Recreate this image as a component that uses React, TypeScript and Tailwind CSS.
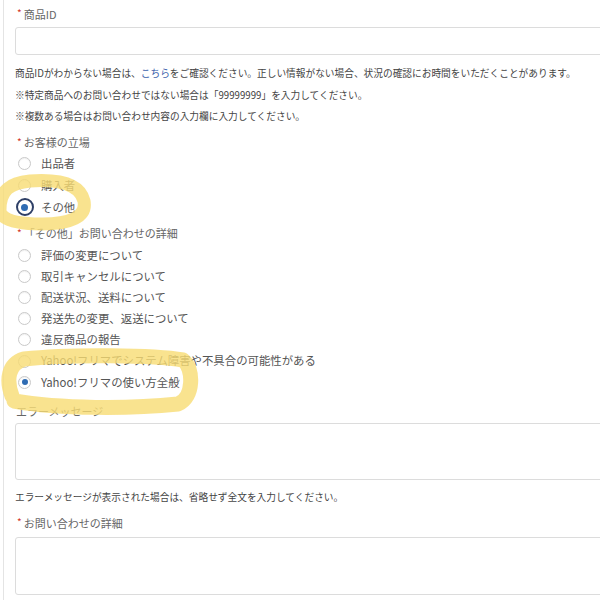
import React from "react";

const font = { fontFamily: '"Noto Sans CJK JP", "Noto Sans", sans-serif' };

function Label({ text, required = true }: { text: string; required?: boolean }) {
  return (
    <div className="flex h-[20px] items-center text-[11px] text-[#666]">
      {required ? (
        <span className="mr-[2px] -translate-y-[1px] pl-[2px] text-[10px] leading-none text-[#d2362b]">*</span>
      ) : null}
      <span>{text}</span>
    </div>
  );
}

function Radio({ label, checked = false, focused = false }: { label: string; checked?: boolean; focused?: boolean }) {
  return (
    <div className="flex h-[21.2px] items-center text-[11.4px] text-[#555]">
      <span className="flex w-[19px] items-center justify-center">
        {focused ? (
          <span className="flex h-[18px] w-[18px] items-center justify-center rounded-full border-2 border-[#2e3f66] bg-white">
            <span className="h-[7px] w-[7px] rounded-full bg-[#2f6cb3]" />
          </span>
        ) : (
          <span className="flex h-[13px] w-[13px] items-center justify-center rounded-full border border-[#c9c9c9] bg-white shadow-[inset_0_1px_1px_rgba(0,0,0,0.06)]">
            {checked ? <span className="h-[6px] w-[6px] rounded-full bg-[#2f6cb3]" /> : null}
          </span>
        )}
      </span>
      <span className="ml-[7px] whitespace-nowrap">{label}</span>
    </div>
  );
}

export default function App() {
  return (
    <div className="relative h-[600px] w-[600px] overflow-hidden bg-white" style={font}>
      <div className="ml-[3px] h-full border-l border-[#e4e4e4] pl-[11px] pt-[4px]">
        <Label text="商品ID" />
        <div className="mt-[3px] h-[28px] w-[640px] rounded-[3px] border border-[#dcdcdc] bg-white" />

        <div className="mt-[8px] text-[9.7px] text-[#444]">
          <div className="flex h-[21.5px] items-center whitespace-nowrap">
            商品IDがわからない場合は、<span className="text-[#3d63ad]">こちら</span>をご確認ください。正しい情報がない場合、状況の確認にお時間をいただくことがあります。
          </div>
          <div className="flex h-[21.5px] items-center whitespace-nowrap">
            ※特定商品へのお問い合わせではない場合は「99999999」を入力してください。
          </div>
          <div className="flex h-[21.5px] items-center whitespace-nowrap">
            ※複数ある場合はお問い合わせ内容の入力欄に入力してください。
          </div>
        </div>

        <div className="mt-[5px]">
          <Label text="お客様の立場" />
        </div>
        <div className="flex flex-col">
          <div className="h-[22px]"><Radio label="出品者" /></div>
          <div className="h-[22px]"><Radio label="購入者" /></div>
          <div className="h-[22px]"><Radio label="その他" focused /></div>
        </div>

        <div className="mt-[5px]">
          <Label text="「その他」お問い合わせの詳細" />
        </div>
        <div className="mt-[1px] flex flex-col">
          <Radio label="評価の変更について" />
          <Radio label="取引キャンセルについて" />
          <Radio label="配送状況、送料について" />
          <Radio label="発送先の変更、返送について" />
          <Radio label="違反商品の報告" />
          <Radio label="Yahoo!フリマでシステム障害や不具合の可能性がある" />
          <Radio label="Yahoo!フリマの使い方全般" checked />
        </div>

        <div className="mt-[8px] pl-[1px]">
          <Label text="エラーメッセージ" required={false} />
        </div>
        <div className="mt-[2px] h-[57px] w-[640px] rounded-[3px] border border-[#dcdcdc] bg-white" />

        <div className="mt-[7px] flex h-[20px] items-center whitespace-nowrap text-[9.7px] text-[#444]">
          エラーメッセージが表示された場合は、省略せず全文を入力してください。
        </div>

        <div className="mt-[6px]">
          <Label text="お問い合わせの詳細" />
        </div>
        <div className="mt-[4px] h-[58px] w-[640px] rounded-[3px] border border-[#dcdcdc] bg-white" />
      </div>

      {/* marker annotations drawn over the form */}
      <svg className="pointer-events-none absolute inset-0" width="600" height="600" viewBox="0 0 600 600">
        <g fill="none" stroke="#f7dc73" strokeOpacity="0.8" strokeLinecap="round" strokeLinejoin="round">
          <path
            strokeWidth="13"
            d="M 0 210 C 0 190, 10 183, 30 181 C 58 179, 80 184, 84 201 C 87 217, 70 224, 42 224 C 20 224, 6 221, 1 214"
          />
          <path
            strokeWidth="15"
            d="M 12 396 C 6 380, 8 364, 24 359 C 70 354, 155 355, 183 360 C 194 368, 194 398, 178 404 C 130 409, 60 409, 14 401"
          />
        </g>
      </svg>
    </div>
  );
}
